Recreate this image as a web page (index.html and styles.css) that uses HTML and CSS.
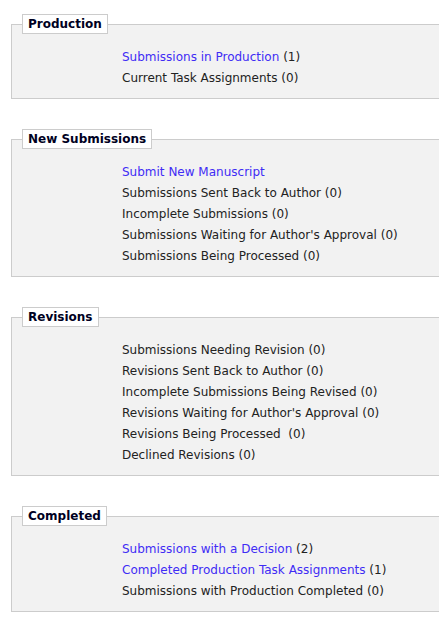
FILE: index.html
```html
<!DOCTYPE html>
<html>
<head>
<meta charset="utf-8">
<link rel="stylesheet" href="styles.css">
</head>
<body>
<div class="page">
  <fieldset class="box">
    <legend class="title">Production</legend>
    <ul class="items">
      <li><a class="link" href="#">Submissions in Production</a> (1)</li>
      <li>Current Task Assignments (0)</li>
    </ul>
  </fieldset>
  <fieldset class="box">
    <legend class="title">New Submissions</legend>
    <ul class="items">
      <li><a class="link" href="#">Submit New Manuscript</a></li>
      <li>Submissions Sent Back to Author (0)</li>
      <li>Incomplete Submissions (0)</li>
      <li>Submissions Waiting for Author's Approval (0)</li>
      <li>Submissions Being Processed (0)</li>
    </ul>
  </fieldset>
  <fieldset class="box">
    <legend class="title">Revisions</legend>
    <ul class="items">
      <li>Submissions Needing Revision (0)</li>
      <li>Revisions Sent Back to Author (0)</li>
      <li>Incomplete Submissions Being Revised (0)</li>
      <li>Revisions Waiting for Author's Approval (0)</li>
      <li>Revisions Being Processed &nbsp;(0)</li>
      <li>Declined Revisions (0)</li>
    </ul>
  </fieldset>
  <fieldset class="box">
    <legend class="title">Completed</legend>
    <ul class="items">
      <li><a class="link" href="#">Submissions with a Decision</a> (2)</li>
      <li><a class="link" href="#">Completed Production Task Assignments</a> (1)</li>
      <li>Submissions with Production Completed (0)</li>
    </ul>
  </fieldset>
</div>
</body>
</html>
```
FILE: styles.css
```css
html, body {
  margin: 0;
  padding: 0;
  background: #fff;
  overflow: hidden;
}
.page {
  display: flex;
  flex-direction: column;
  gap: 30px;
  padding: 14px 0 0 11px;
  width: 460px;
  font-family: "DejaVu Sans", Verdana, sans-serif;
  font-size: 12px;
  color: #222;
}
.box {
  margin: 0;
  padding: 0 0 9px 0;
  border: 1px solid #ccc;
  background: #f2f2f2;
  min-width: 0;
}
.title {
  margin-left: 10px;
  padding: 0 5px;
  height: 18px;
  line-height: 18px;
  border: 1px solid #ccc;
  background: #fff;
  font-weight: bold;
  font-size: 12px;
  color: #000022;
}
.items {
  list-style: none;
  margin: 0;
  padding: 13px 0 0 110px;
}
.items li {
  height: 21px;
  line-height: 21px;
  white-space: nowrap;
}
.link {
  color: #3f2cf5;
  text-decoration: none;
}
```
